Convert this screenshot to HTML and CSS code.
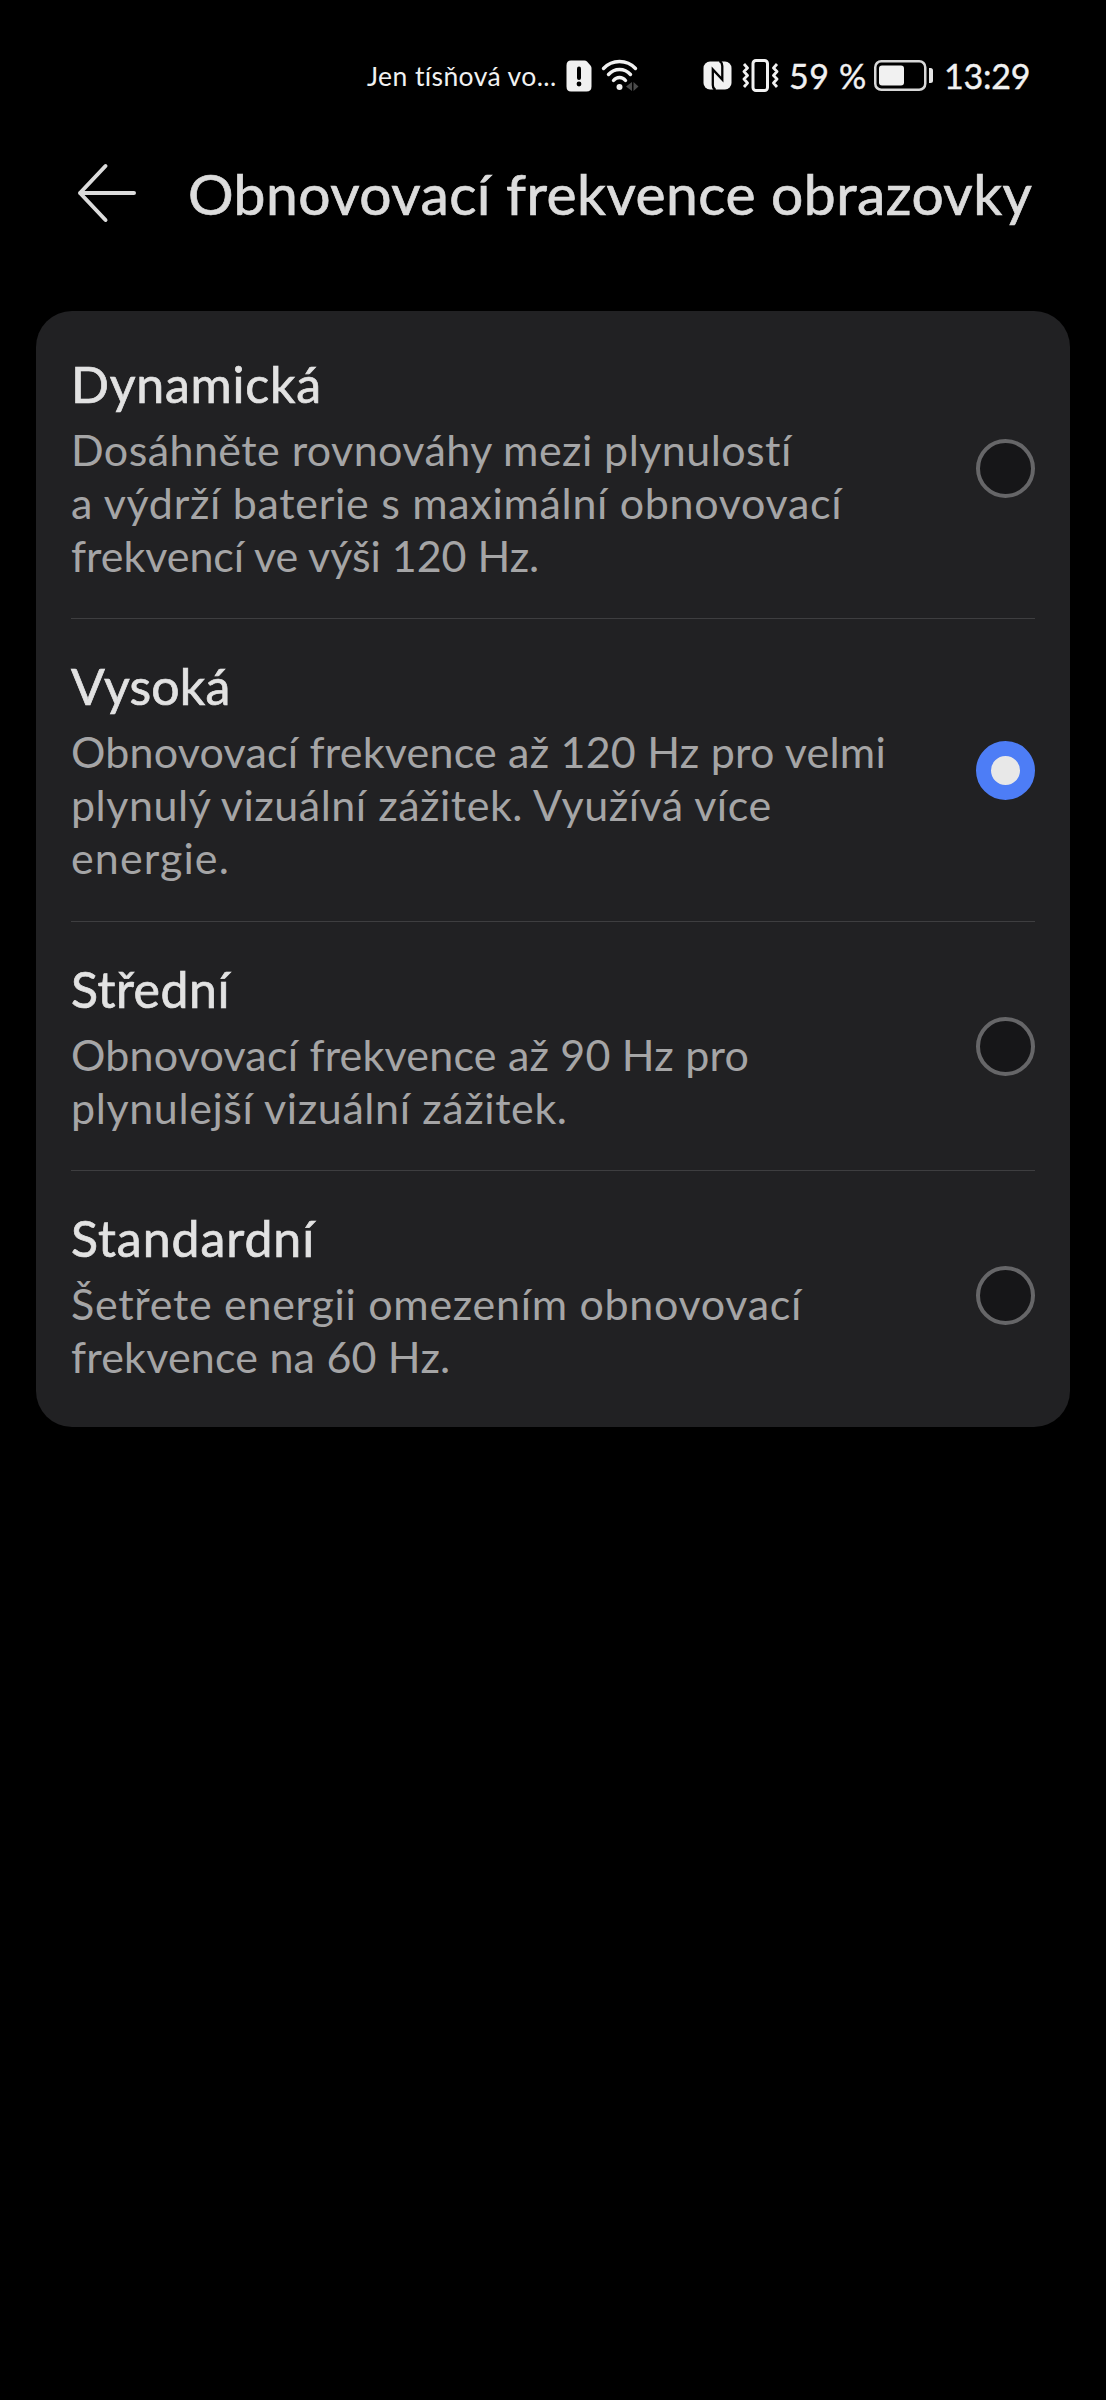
FILE: index.html
```
<!DOCTYPE html>
<html lang="cs">
<head>
<meta charset="utf-8">
<title>Obnovovací frekvence obrazovky</title>
<link rel="stylesheet" href="styles.css">
</head>
<body>
<header class="status">
  <span class="carrier">Jen tísňová vo...</span>
  <svg class="sim" width="26" height="32" viewBox="0 0 26 32"><path fill="#f1f1f1" d="M5 .5h13.500q1.500 0 2.500 1l3.500 4q1 1 1 2.500v18.500q0 5-5 5H5q-4.500 0-4.500-5v-21Q.5.5 5 .5z"/><path stroke="#000" stroke-width="4" stroke-linecap="round" d="M13 8.500v9.500"/><circle cx="13" cy="24" r="2.400"/></svg>
  <svg class="wifi" width="38" height="33" viewBox="0 0 38 33"><g fill="none" stroke="#f1f1f1" stroke-width="3.400" stroke-linecap="round"><path d="M2.500 9.500Q9 2.500 18.500 2.500T34.500 9.500"/><path d="M7.500 15.500Q12 10.500 18.500 10.500T29.500 15.500"/><path d="M12.500 21.500Q15 18.500 18.500 18.500T24.500 21.500"/></g><circle cx="18.500" cy="28" r="3" fill="#f1f1f1"/><path fill="#4a4a4a" d="M31 23v9l-6-4.500zM32.500 23v9l5-4.500z"/></svg>
  <svg class="nfc" width="29" height="29" viewBox="0 0 29 29"><rect x=".5" y=".5" width="28" height="28" rx="6.500" fill="#f1f1f1"/><path fill="none" stroke="#000" stroke-width="2.300" d="M12.500 29Q9.800 27.500 9.800 24V8.500L19.300 18.500V5Q19.300 1.500 16.500 0"/></svg>
  <svg class="vibrate" width="37" height="33" viewBox="0 0 37 33"><g fill="none" stroke="#f1f1f1" stroke-width="3"><rect x="11" y="1.500" width="14.500" height="30" rx="3"/><path stroke-width="2.800" stroke-linejoin="round" d="M2 5l3.500 4-3.500 3.500 3.500 4-3.500 3.500 3.500 4L2 28M35 5l-3.500 4 3.500 3.500-3.500 4 3.500 3.500-3.500 4L35 28"/></g></svg>
  <span class="percent">59 %</span>
  <svg class="battery" width="59" height="31" viewBox="0 0 59 31"><rect x="1.250" y="1.250" width="50" height="28.500" rx="6" fill="none" stroke="#d8d8d8" stroke-width="2.500"/><rect x="5" y="5.500" width="25" height="20" rx="3" fill="#f1f1f1"/><path fill="#e4e4e4" d="M55 8h1.500q2.500 0 2.500 2.500v10q0 2.500-2.500 2.500H55z"/></svg>
  <span class="clock">13:29</span>
</header>
<nav class="appbar">
  <svg class="back" width="60" height="60" viewBox="0 0 60 60"><path fill="none" stroke="#dcdcdc" stroke-width="4" stroke-linecap="round" stroke-linejoin="round" d="M28.500 3L3 30l25.500 27M3 30h54"/></svg>
  <h1 class="heading">Obnovovací frekvence obrazovky</h1>
</nav>
<main class="card">
  <section class="option dynamic">
    <div class="text">
      <h2>Dynamická</h2>
      <p><span class="l1">Dosáhněte rovnováhy mezi plynulostí</span><br><span class="l2">a výdrží baterie s maximální obnovovací</span><br><span class="l3">frekvencí ve výši 120 Hz.</span></p>
    </div>
    <i class="radio"></i>
  </section>
  <section class="option high">
    <div class="text">
      <h2>Vysoká</h2>
      <p><span class="l1">Obnovovací frekvence až 120 Hz pro velmi</span><br><span class="l2">plynulý vizuální zážitek. Využívá více</span><br><span class="l3">energie.</span></p>
    </div>
    <i class="radio checked"></i>
  </section>
  <section class="option medium">
    <div class="text">
      <h2>Střední</h2>
      <p><span class="l1">Obnovovací frekvence až 90 Hz pro</span><br><span class="l2">plynulejší vizuální zážitek.</span></p>
    </div>
    <i class="radio"></i>
  </section>
  <section class="option standard">
    <div class="text">
      <h2>Standardní</h2>
      <p><span class="l1">Šetřete energii omezením obnovovací</span><br><span class="l2">frekvence na 60 Hz.</span></p>
    </div>
    <i class="radio"></i>
  </section>
</main>
</body>
</html>
```
FILE: styles.css
```
* { box-sizing: border-box; }
body {
  margin: 0;
  min-height: 2400px;
  background: #000;
  color: #e2e2e2;
  font-family: Lato, "Liberation Sans", sans-serif;
  font-variant-ligatures: none;
  white-space: nowrap;
}
svg { display: block; flex: none; }
h1, h2, p { margin: 0; font-weight: 400; }

.status {
  display: flex;
  align-items: center;
  height: 151px;
  padding-left: 367px;
  color: #f1f1f1;
}
.carrier { width: 199px; font-size: 26.500px; letter-spacing: .4px; }
.wifi { margin-left: 9px; }
.nfc { margin-left: 64px; }
.vibrate { margin-left: 10px; }
.percent { width: 85px; margin-left: 10px; font-size: 34px; letter-spacing: .6px; -webkit-text-stroke: .4px; }
.clock { margin-left: 11px; font-size: 34px; letter-spacing: -.2px; -webkit-text-stroke: .4px; }

.appbar {
  display: flex;
  align-items: center;
  height: 84px;
  padding-left: 77px;
}
.heading { margin-left: 51px; color: #dcdcdc; font-size: 57px; letter-spacing: .45px; -webkit-text-stroke: .7px; }

.card {
  margin: 76px 36px 0;
  padding: 6px 35px 8px;
  border-radius: 36px;
  background: #212123;
}
.option {
  display: flex;
  align-items: center;
  justify-content: space-between;
  padding: 37px 0 36.300px;
  border-bottom: 1px solid #3e3e40;
}
.option:last-child { border: 0; }
h2 { margin-bottom: 9px; font-size: 50px; line-height: 60px; -webkit-text-stroke: .7px; }
p { color: #a5a5a6; font-size: 43px; line-height: 53px; }

.dynamic h2 { letter-spacing: .8px; }
.dynamic .l1 { letter-spacing: .43px; }
.dynamic .l2 { letter-spacing: .69px; }
.dynamic .l3 { letter-spacing: -.05px; }
.high h2 { letter-spacing: .2px; }
.high .l1 { letter-spacing: .21px; }
.high .l2 { letter-spacing: .52px; }
.high .l3 { letter-spacing: 1.100px; }
.medium h2 { letter-spacing: .5px; }
.medium .l1 { letter-spacing: .2px; }
.medium .l2 { letter-spacing: .6px; }
.standard h2 { letter-spacing: .95px; }
.standard .l1 { letter-spacing: .7px; }
.standard .l2 { letter-spacing: .19px; }

.radio {
  width: 59px;
  height: 59px;
  border: 4px solid #666668;
  border-radius: 50%;
  background: #161618;
}
.radio.checked { border: 15px solid #4d7df6; background: #e8e8e8; }
```
